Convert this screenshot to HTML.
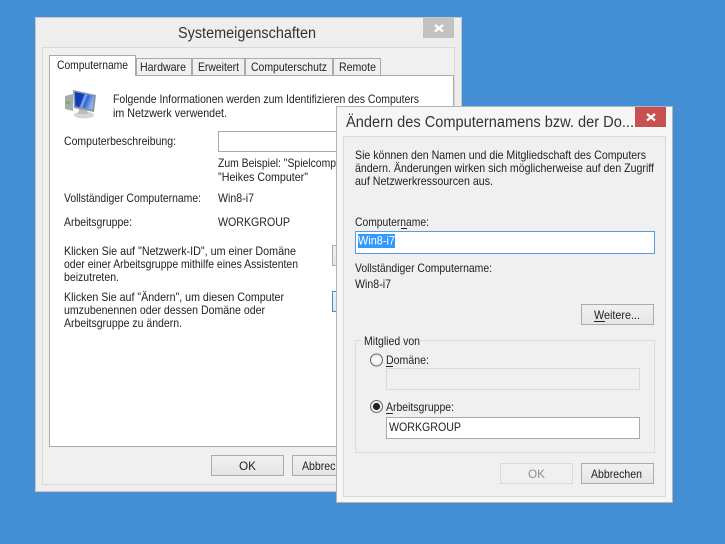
<!DOCTYPE html>
<html lang="de"><head><meta charset="utf-8"><title>Systemeigenschaften</title>
<style>
html,body{margin:0;padding:0;width:725px;height:544px;overflow:hidden;background:#448fd3}
svg{display:block}
text{font-family:"Liberation Sans",sans-serif;font-size:12px;fill:#222}
.t{font-size:15.5px;fill:#333}
</style></head><body>
<svg width="725" height="544" viewBox="0 0 725 544" xmlns="http://www.w3.org/2000/svg" shape-rendering="crispEdges">
<defs>
<linearGradient id="b" x1="0" y1="0" x2="0" y2="1"><stop offset="0" stop-color="#f1f1f1"/><stop offset="1" stop-color="#e5e5e5"/></linearGradient>
<linearGradient id="s" x1="0" y1="0" x2="1" y2=".35"><stop offset="0" stop-color="#0b34b0"/><stop offset=".45" stop-color="#0d3fc4"/><stop offset=".55" stop-color="#8fb0e8"/><stop offset=".68" stop-color="#2f63d6"/><stop offset="1" stop-color="#8fb0e8"/></linearGradient>
<radialGradient id="r"><stop offset="0" stop-color="#fff"/><stop offset="1" stop-color="#eee"/></radialGradient>
</defs>
<!-- back window -->
<rect x="35.5" y="17.5" width="426" height="474" fill="#eeeeee" stroke="#c8c8c8"/>
<rect x="42.5" y="47.5" width="412" height="437" fill="#f0f0f0" stroke="#d9d9d9"/>
<text class="t" x="178" y="38" textLength="138" lengthAdjust="spacingAndGlyphs">Systemeigenschaften</text>
<rect x="423" y="18" width="31" height="20" fill="#c2c2c2"/>
<path d="M435 25l8 6.500M443 25l-8 6.500" stroke="#fff" stroke-width="2.300" fill="none" shape-rendering="auto"/>
<!-- panel + tabs -->
<rect x="49.5" y="75.5" width="404" height="371" fill="#fff" stroke="#aaa"/>
<g fill="#f0f0f0" stroke="#aaa">
<rect x="136.5" y="58.5" width="55" height="17"/>
<rect x="192.5" y="58.5" width="52" height="17"/>
<rect x="245.5" y="58.5" width="87" height="17"/>
<rect x="333.5" y="58.5" width="47" height="17"/>
</g>
<path d="M49.5 76V55.5H135.5V76" fill="#fff" stroke="#aaa"/>
<rect x="50" y="74" width="85" height="3" fill="#fff"/>
<text x="57" y="69" textLength="71" lengthAdjust="spacingAndGlyphs">Computername</text>
<text x="140" y="71" textLength="46" lengthAdjust="spacingAndGlyphs">Hardware</text>
<text x="198" y="71" textLength="41" lengthAdjust="spacingAndGlyphs">Erweitert</text>
<text x="251" y="71" textLength="76" lengthAdjust="spacingAndGlyphs">Computerschutz</text>
<text x="339" y="71" textLength="37" lengthAdjust="spacingAndGlyphs">Remote</text>
<!-- icon -->
<g shape-rendering="auto">
<ellipse cx="84" cy="115" rx="10" ry="3.6" fill="#d3d6da"/>
<path d="M79 109l8 1 1 4h-10z" fill="#b9bdc3"/>
<path d="M65 96l8-2v17l-8-2z" fill="#a4abb3"/>
<path d="M66 101h4v3h-4z" fill="#7cb24a"/>
<path d="M73 90l23 5-2 17-20-4z" fill="#8b96a1"/>
<path d="M75 92l19 4-1.5 13.5-17-3.2z" fill="url(#s)"/>
</g>
<text x="113" y="103" textLength="306" lengthAdjust="spacingAndGlyphs">Folgende Informationen werden zum Identifizieren des Computers</text>
<text x="113" y="117" textLength="114" lengthAdjust="spacingAndGlyphs">im Netzwerk verwendet.</text>
<text x="64" y="145" textLength="112" lengthAdjust="spacingAndGlyphs">Computerbeschreibung:</text>
<rect x="218.5" y="131.5" width="125" height="20" fill="#fff" stroke="#aaa"/>
<text x="218" y="167" textLength="118" lengthAdjust="spacingAndGlyphs">Zum Beispiel: "Spielcomp</text>
<text x="218" y="181" textLength="90" lengthAdjust="spacingAndGlyphs">"Heikes Computer"</text>
<text x="64" y="202" textLength="137" lengthAdjust="spacingAndGlyphs">Vollständiger Computername:</text>
<text x="218" y="202" textLength="36" lengthAdjust="spacingAndGlyphs">Win8-i7</text>
<text x="64" y="226" textLength="68" lengthAdjust="spacingAndGlyphs">Arbeitsgruppe:</text>
<text x="218" y="226" textLength="72" lengthAdjust="spacingAndGlyphs">WORKGROUP</text>
<text x="64" y="255" textLength="232" lengthAdjust="spacingAndGlyphs">Klicken Sie auf "Netzwerk-ID", um einer Domäne</text>
<text x="64" y="268" textLength="234" lengthAdjust="spacingAndGlyphs">oder einer Arbeitsgruppe mithilfe eines Assistenten</text>
<text x="64" y="281" textLength="55" lengthAdjust="spacingAndGlyphs">beizutreten.</text>
<text x="64" y="301" textLength="220" lengthAdjust="spacingAndGlyphs">Klicken Sie auf "Ändern", um diesen Computer</text>
<text x="64" y="314" textLength="201" lengthAdjust="spacingAndGlyphs">umzubenennen oder dessen Domäne oder</text>
<text x="64" y="327" textLength="118" lengthAdjust="spacingAndGlyphs">Arbeitsgruppe zu ändern.</text>
<rect x="332.5" y="245.5" width="20" height="20" fill="url(#b)" stroke="#ababab"/>
<rect x="332.5" y="291.5" width="20" height="20" fill="url(#b)" stroke="#3c8fe0"/>
<rect x="211.5" y="455.5" width="72" height="20" fill="url(#b)" stroke="#ababab"/>
<text x="239" y="470" textLength="17" lengthAdjust="spacingAndGlyphs">OK</text>
<rect x="292.5" y="455.5" width="72" height="20" fill="url(#b)" stroke="#ababab"/>
<text x="302" y="470" textLength="51" lengthAdjust="spacingAndGlyphs">Abbrechen</text>
<!-- front window -->
<rect x="336.5" y="106.5" width="336" height="396" fill="#f6f6f6" stroke="#b4b4b4"/>
<rect x="343.5" y="136.5" width="322" height="360" fill="#f0f0f0" stroke="#d9d9d9"/>
<text class="t" x="346" y="127" textLength="288" lengthAdjust="spacingAndGlyphs">Ändern des Computernamens bzw. der Do...</text>
<rect x="635" y="107" width="31" height="20" fill="#c75050"/>
<path d="M647 114l8 6.500M655 114l-8 6.500" stroke="#fff" stroke-width="2.300" fill="none" shape-rendering="auto"/>
<text x="355" y="159" textLength="291" lengthAdjust="spacingAndGlyphs">Sie können den Namen und die Mitgliedschaft des Computers</text>
<text x="355" y="172" textLength="299" lengthAdjust="spacingAndGlyphs">ändern. Änderungen wirken sich möglicherweise auf den Zugriff</text>
<text x="355" y="185" textLength="138" lengthAdjust="spacingAndGlyphs">auf Netzwerkressourcen aus.</text>
<text x="355" y="226" textLength="74" lengthAdjust="spacingAndGlyphs">Computername:</text>
<rect x="401" y="228" width="6" height="1" fill="#222"/>
<rect x="355.5" y="231.5" width="299" height="22" fill="#fff" stroke="#569de5"/>
<rect x="358" y="234" width="37" height="14" fill="#3399ff"/>
<text x="358" y="244.500" textLength="37" lengthAdjust="spacingAndGlyphs" style="fill:#fff">Win8-i7</text>
<text x="355" y="272" textLength="137" lengthAdjust="spacingAndGlyphs">Vollständiger Computername:</text>
<text x="355" y="288" textLength="36" lengthAdjust="spacingAndGlyphs">Win8-i7</text>
<rect x="581.5" y="304.5" width="72" height="20" fill="url(#b)" stroke="#ababab"/>
<text x="594" y="319" textLength="46" lengthAdjust="spacingAndGlyphs">Weitere...</text>
<rect x="594" y="321" width="11" height="1" fill="#222"/>
<rect x="355.5" y="340.5" width="299" height="112" fill="none" stroke="#dcdcdc"/>
<rect x="361" y="338" width="60" height="5" fill="#f0f0f0"/>
<text x="364" y="345" textLength="56" lengthAdjust="spacingAndGlyphs">Mitglied von</text>
<g shape-rendering="auto">
<circle cx="376.5" cy="360" r="6" fill="url(#r)" stroke="#666"/>
<circle cx="376.5" cy="406.5" r="6" fill="url(#r)" stroke="#666"/>
<circle cx="376.5" cy="406.5" r="3.6" fill="#222"/>
</g>
<text x="386" y="364" textLength="43" lengthAdjust="spacingAndGlyphs">Domäne:</text>
<rect x="386" y="366" width="7" height="1" fill="#222"/>
<rect x="386.5" y="368.5" width="253" height="21" fill="#f0f0f0" stroke="#d9d9d9"/>
<text x="386" y="411" textLength="68" lengthAdjust="spacingAndGlyphs">Arbeitsgruppe:</text>
<rect x="386" y="413" width="7" height="1" fill="#222"/>
<rect x="386.5" y="417.5" width="253" height="21" fill="#fff" stroke="#aaa"/>
<text x="389" y="431" textLength="72" lengthAdjust="spacingAndGlyphs">WORKGROUP</text>
<rect x="500.5" y="463.5" width="72" height="20" fill="#f0f0f0" stroke="#d9d9d9"/>
<text x="528" y="478" textLength="17" lengthAdjust="spacingAndGlyphs" style="fill:#8e8e8e">OK</text>
<rect x="581.5" y="463.5" width="72" height="20" fill="url(#b)" stroke="#ababab"/>
<text x="591" y="478" textLength="51" lengthAdjust="spacingAndGlyphs">Abbrechen</text>
</svg>
</body></html>
